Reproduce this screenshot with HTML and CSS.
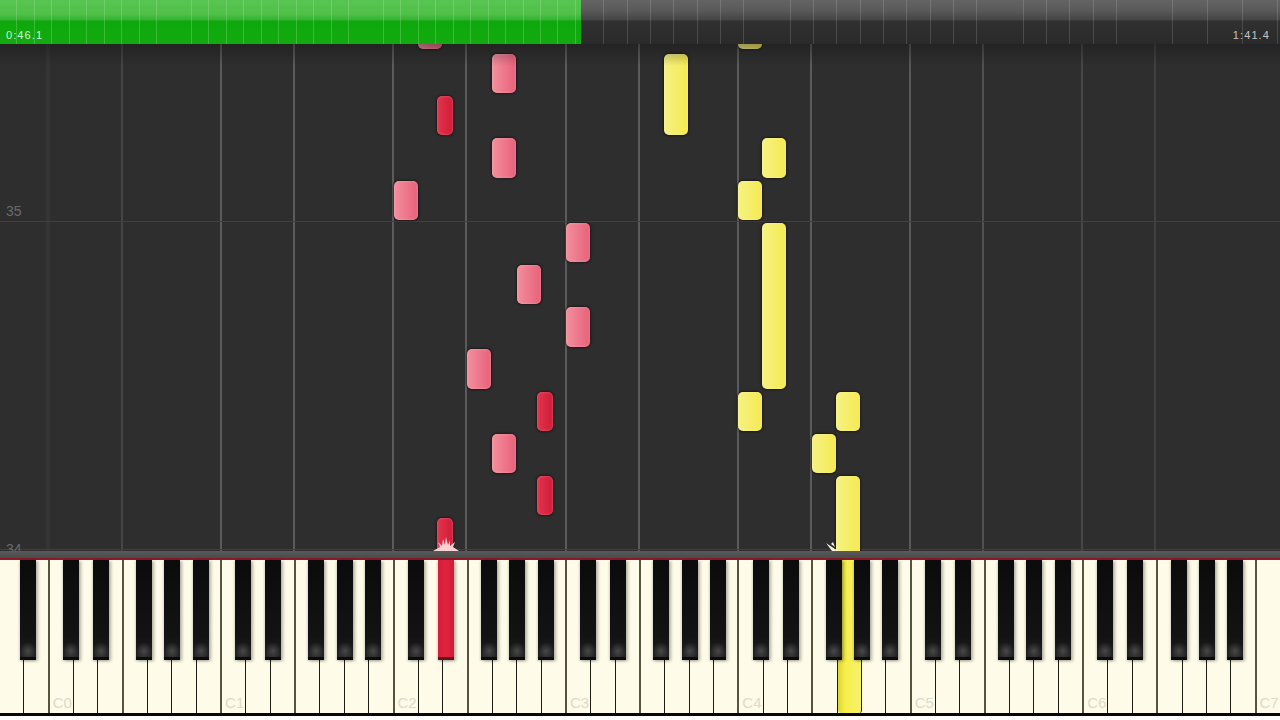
FILE: index.html
```html
<!DOCTYPE html>
<html lang="en">
<head>
    <meta charset="UTF-8">
    <title>Synthesia</title>
    <link rel="stylesheet" href="styles.css">
</head>
<body>
    <div class="timeline">
        <div class="segment played"></div>
        <div class="segment middle"></div>
        <div class="segment last"></div>
        <span class="time time-now">0:46.1</span>
        <span class="time time-total">1:41.4</span>
    </div>

    <div class="roll">
        <span class="measure" style="top: 159px">35</span>
        <span class="measure" style="top: 497px">34</span>

        <!-- red hand -->
        <div class="note pink" style="left: 418px; top: -8px; height: 13px"></div>
        <div class="note pink" style="left: 492px; top: 10px; height: 39px"></div>
        <div class="note red" style="left: 437px; top: 52px; height: 39px"></div>
        <div class="note pink" style="left: 492px; top: 94px; height: 40px"></div>
        <div class="note pink" style="left: 394px; top: 137px; height: 39px"></div>
        <div class="note pink" style="left: 566px; top: 179px; height: 39px"></div>
        <div class="note pink" style="left: 517px; top: 221px; height: 39px"></div>
        <div class="note pink" style="left: 566px; top: 263px; height: 40px"></div>
        <div class="note pink" style="left: 467px; top: 305px; height: 40px"></div>
        <div class="note red" style="left: 537px; top: 348px; height: 39px"></div>
        <div class="note pink" style="left: 492px; top: 390px; height: 39px"></div>
        <div class="note red" style="left: 537px; top: 432px; height: 39px"></div>
        <div class="note red" style="left: 437px; top: 474px; height: 40px"></div>

        <!-- yellow hand -->
        <div class="note yellow" style="left: 738px; top: -8px; height: 13px"></div>
        <div class="note yellow" style="left: 664px; top: 10px; height: 81px"></div>
        <div class="note yellow" style="left: 762px; top: 94px; height: 40px"></div>
        <div class="note yellow" style="left: 738px; top: 137px; height: 39px"></div>
        <div class="note yellow" style="left: 762px; top: 179px; height: 166px"></div>
        <div class="note yellow" style="left: 738px; top: 348px; height: 39px"></div>
        <div class="note yellow" style="left: 836px; top: 348px; height: 39px"></div>
        <div class="note yellow" style="left: 812px; top: 390px; height: 39px"></div>
        <div class="note yellow" style="left: 836px; top: 432px; height: 84px"></div>

        <svg class="spark spark-red" viewBox="0 0 26 14">
            <path d="M0 14 L7 10 L5 5 L9 9 L10 2 L12 8 L13 0 L15 8 L17 3 L17 9 L22 5 L20 10 L26 14 Z" fill="#fbd3d3"/>
        </svg>
        <svg class="spark spark-yellow" viewBox="0 0 14 10">
            <path d="M0 2 L9 8 L14 10 L6 10 Z M5 3 L9 6 L7 1 Z" fill="#f4f2d4"/>
        </svg>
    </div>

    <div class="divider"></div>

    <div class="keys">
        <div class="key"><div class="sharp as"></div></div>
        <div class="key edge"></div>
        <!-- octave 0 -->
        <div class="key"><span class="label">C0</span><div class="sharp cs"></div></div>
        <div class="key"><div class="sharp ds"></div></div>
        <div class="key edge"></div>
        <div class="key"><div class="sharp fs"></div></div>
        <div class="key"><div class="sharp gs"></div></div>
        <div class="key"><div class="sharp as"></div></div>
        <div class="key edge"></div>
        <!-- octave 1 -->
        <div class="key"><span class="label">C1</span><div class="sharp cs"></div></div>
        <div class="key"><div class="sharp ds"></div></div>
        <div class="key edge"></div>
        <div class="key"><div class="sharp fs"></div></div>
        <div class="key"><div class="sharp gs"></div></div>
        <div class="key"><div class="sharp as"></div></div>
        <div class="key edge"></div>
        <!-- octave 2 -->
        <div class="key"><span class="label">C2</span><div class="sharp cs"></div></div>
        <div class="key"><div class="sharp ds lit-red"></div></div>
        <div class="key edge"></div>
        <div class="key"><div class="sharp fs"></div></div>
        <div class="key"><div class="sharp gs"></div></div>
        <div class="key"><div class="sharp as"></div></div>
        <div class="key edge"></div>
        <!-- octave 3 -->
        <div class="key"><span class="label">C3</span><div class="sharp cs"></div></div>
        <div class="key"><div class="sharp ds"></div></div>
        <div class="key edge"></div>
        <div class="key"><div class="sharp fs"></div></div>
        <div class="key"><div class="sharp gs"></div></div>
        <div class="key"><div class="sharp as"></div></div>
        <div class="key edge"></div>
        <!-- octave 4 -->
        <div class="key"><span class="label">C4</span><div class="sharp cs"></div></div>
        <div class="key"><div class="sharp ds"></div></div>
        <div class="key edge"></div>
        <div class="key"><div class="sharp fs"></div></div>
        <div class="key lit-yellow"><div class="sharp gs"></div></div>
        <div class="key"><div class="sharp as"></div></div>
        <div class="key edge"></div>
        <!-- octave 5 -->
        <div class="key"><span class="label">C5</span><div class="sharp cs"></div></div>
        <div class="key"><div class="sharp ds"></div></div>
        <div class="key edge"></div>
        <div class="key"><div class="sharp fs"></div></div>
        <div class="key"><div class="sharp gs"></div></div>
        <div class="key"><div class="sharp as"></div></div>
        <div class="key edge"></div>
        <!-- octave 6 -->
        <div class="key"><span class="label">C6</span><div class="sharp cs"></div></div>
        <div class="key"><div class="sharp ds"></div></div>
        <div class="key edge"></div>
        <div class="key"><div class="sharp fs"></div></div>
        <div class="key"><div class="sharp gs"></div></div>
        <div class="key"><div class="sharp as"></div></div>
        <div class="key edge"></div>
        <!-- top C -->
        <div class="key last-key"><span class="label">C7</span></div>
    </div>
    <div class="key-bed"></div>
</body>
</html>
```

FILE: styles.css
```css
html, body {
    margin: 0;
    height: 720px;
    overflow: hidden;
    background: #fff;
}
body {
    display: flex;
    flex-direction: column;
    font-family: "Liberation Sans", Arial, sans-serif;
}

/* timeline */
.timeline {
    position: relative;
    display: flex;
    height: 44px;
    flex: none;
}
.segment {
    height: 100%;
    background-repeat: repeat-x;
}
.played {
    width: 581px;
    background-image:
        repeating-linear-gradient(90deg, transparent 0 16.5px, rgba(190, 240, 180, 0.25) 16.5px 17.45px),
        linear-gradient(#58c552 0, #4fc049 14px, #35b22f 20px, #0ea80c 21px, #12aa10 100%);
}
.middle {
    width: 557px;
    background-image:
        repeating-linear-gradient(90deg, transparent 0 22.4px, rgba(255, 255, 255, 0.14) 22.4px 23.3px),
        linear-gradient(#646464 0, #5a5a5a 10px, #444 20px, #303030 21px, #2a2a2a 100%);
}
.last {
    flex: 1;
    background-image:
        repeating-linear-gradient(90deg, transparent 0 16.6px, rgba(255, 255, 255, 0.14) 16.6px 17.5px),
        linear-gradient(#646464 0, #5a5a5a 10px, #444 20px, #303030 21px, #2a2a2a 100%);
}
.time {
    position: absolute;
    top: 29px;
    font-size: 11px;
    line-height: 12px;
    letter-spacing: 1.1px;
}
.time-now {
    left: 6px;
    color: #d5f2cf;
}
.time-total {
    right: 10px;
    color: #c4c4c4;
}

/* falling notes */
.roll {
    position: relative;
    height: 507px;
    flex: none;
    overflow: hidden;
    background-color: #2e2e2e;
    background-image:
        linear-gradient(#404040, #404040),
        linear-gradient(#404040, #404040),
        linear-gradient(90deg, rgba(46, 46, 46, 0.85) 50px, rgba(46, 46, 46, 0) 225px, rgba(46, 46, 46, 0) 880px, rgba(46, 46, 46, 0.6) 1155px, #2e2e2e 1235px),
        repeating-linear-gradient(90deg, #5b5b5b 0 2px, transparent 2px 73px, #5b5b5b 73px 75px, transparent 75px 172.2px);
    background-size: 100% 1px, 100% 1px, auto, auto;
    background-position: 0 177px, 0 505px, 0 0, 48px 0;
    background-repeat: no-repeat, no-repeat, no-repeat, repeat-x;
}
.roll::after {
    content: "";
    position: absolute;
    top: 0;
    left: 0;
    right: 0;
    height: 22px;
    background: linear-gradient(rgba(20, 20, 20, 0.4), rgba(20, 20, 20, 0));
}
.measure {
    position: absolute;
    left: 6px;
    font-size: 14px;
    line-height: 16px;
    color: #6a6a6a;
}
.note {
    position: absolute;
    width: 24px;
    box-sizing: border-box;
    border-radius: 5px;
    box-shadow: 0 0 2px 1px rgba(25, 10, 10, 0.6), inset 0 0 2px 1px rgba(255, 255, 255, 0.14);
}
.pink {
    background: linear-gradient(90deg, #f28f9d, #e8617a);
}
.red {
    width: 16px;
    background: linear-gradient(90deg, #e2344c, #d01c38);
}
.yellow {
    background: linear-gradient(90deg, #f6f283, #f4ea50);
}
.spark {
    position: absolute;
    z-index: 1;
}
.spark-red {
    left: 433px;
    top: 493px;
    width: 26px;
    height: 14px;
}
.spark-yellow {
    left: 826px;
    top: 497px;
    width: 14px;
    height: 10px;
}

/* keyboard */
.divider {
    height: 7px;
    flex: none;
    background: linear-gradient(#5a5a5a, #4a4a4a);
    border-bottom: 2px solid #8a1a2a;
}
.keys {
    display: flex;
    height: 153px;
    flex: none;
}
.key {
    position: relative;
    flex: 1 1 0;
    display: flex;
    align-items: flex-end;
    box-sizing: border-box;
    border-right: 1px solid #1c1c14;
    background: #fefce8;
}
.edge {
    border-right: 2px solid #55543f;
}
.last-key {
    border-right: none;
}
.lit-yellow {
    border-radius: 0 0 3px 3px;
    background: linear-gradient(90deg, #dcd436, #f6ef4a 30%, #f7f16c);
}
.label {
    margin: 0 0 3px 3px;
    font-size: 15px;
    line-height: 14px;
    color: #dcdacb;
}
.sharp {
    position: absolute;
    z-index: 1;
    top: 0;
    width: 16px;
    height: 100px;
    box-sizing: border-box;
    border-bottom: 3px solid #0c0c0c;
    background:
        radial-gradient(ellipse 8px 9px at 50% 94%, rgba(90, 90, 90, 0.7), rgba(90, 90, 90, 0)),
        linear-gradient(#0b0b0b 0, #131313 80%, #222 100%);
    box-shadow: 2px 1px 3px rgba(0, 0, 0, 0.3), -1px 1px 2px rgba(0, 0, 0, 0.15);
}
.cs { right: -6px; }
.ds { right: -11.5px; }
.fs { right: -5px; }
.gs { right: -9px; }
.as { right: -13px; }
.lit-red {
    border-bottom-color: #6a1020;
    background: linear-gradient(90deg, #d41c3a, #e0243f 50%, #cf1a36);
}
.key-bed {
    height: 3px;
    flex: none;
    background: #060606;
}
```
